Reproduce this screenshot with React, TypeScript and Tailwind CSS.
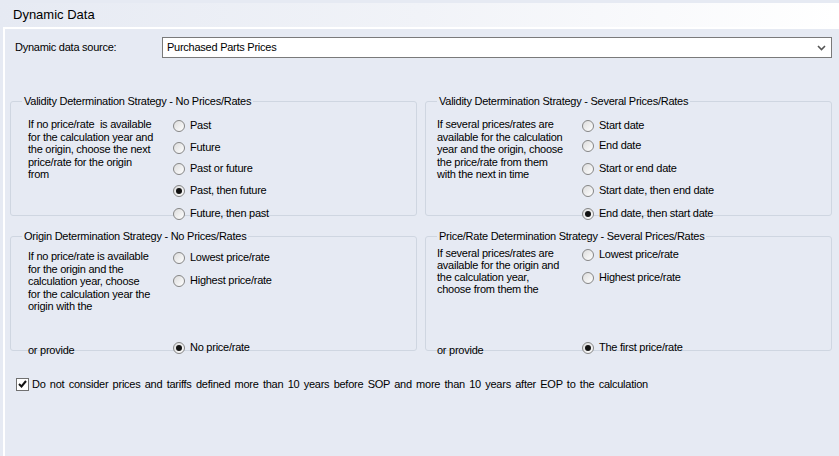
import React from 'react';

function Radio({ label, checked }: { label: string; checked?: boolean }) {
  return (
    <div className="flex items-center h-[13px] whitespace-nowrap">
      <span className="w-[12px] h-[12px] shrink-0 rounded-full border border-[#858585] bg-gradient-to-br from-[#dcdcdc] to-white flex items-center justify-center">
        {checked && <span className="w-[6px] h-[6px] rounded-full bg-[#111]" />}
      </span>
      <span className="ml-[5px]">{label}</span>
    </div>
  );
}

function Group({
  title,
  children,
}: {
  title: string;
  children: React.ReactNode;
}) {
  return (
    <fieldset className="border border-[#cfd6e1] rounded-[3px] h-[121px] px-0 min-w-0">
      <legend className="ml-[11px] px-[2px] leading-[13px] whitespace-nowrap">{title}</legend>
      {children}
    </fieldset>
  );
}

export default function App() {
  return (
    <div
      className="w-[839px] h-[456px] bg-[#e6eaf3] text-[11px] tracking-[-0.25px] text-black overflow-hidden"
      style={{ fontFamily: '"Liberation Sans", Arial, sans-serif' }}
    >
      {/* Title band */}
      <div className="pt-[3px]">
        <div className="h-[24px] bg-gradient-to-r from-[#e6eaf3] via-[#f1f3f8] to-white flex items-center pl-[13px] text-[13px] tracking-normal">
          Dynamic Data
        </div>
      </div>

      <div className="ml-[3px] border-l-2 border-t-2 border-white h-full pl-[5px] pr-[7px]">
        {/* Data source */}
        <div className="flex items-center mt-[8px] h-[21px]">
          <div className="w-[152px] pl-[5px]">Dynamic data source:</div>
          <div className="flex-1 h-[21px] bg-white border border-[#7a7a7a] flex items-center pl-[4px] pr-[5px]">
            <span className="flex-1">Purchased Parts Prices</span>
            <svg width="9" height="6" viewBox="0 0 9 6">
              <path d="M1 1 L4.5 4.5 L8 1" fill="none" stroke="#555" strokeWidth="1.6" />
            </svg>
          </div>
        </div>

        <div className="grid grid-cols-2 gap-x-[8px] gap-y-[14px] mt-[37px]">
          <Group title="Validity Determination Strategy - No Prices/Rates">
            <div className="flex pt-[10px]">
              <div className="w-[162px] pl-[17px] leading-[12.5px] whitespace-nowrap">
                If no price/rate&nbsp; is available
                <br />
                for the calculation year and
                <br />
                the origin, choose the next
                <br />
                price/rate for the origin
                <br />
                from
              </div>
              <div className="flex flex-col pt-[1px]">
                <Radio label="Past" />
                <div className="h-[9px]" />
                <Radio label="Future" />
                <div className="h-[8px]" />
                <Radio label="Past or future" />
                <div className="h-[9px]" />
                <Radio label="Past, then future" checked />
                <div className="h-[10px]" />
                <Radio label="Future, then past" />
              </div>
            </div>
          </Group>

          <Group title="Validity Determination Strategy - Several Prices/Rates">
            <div className="flex pt-[10px]">
              <div className="w-[156px] pl-[11px] leading-[12.5px] whitespace-nowrap">
                If several prices/rates are
                <br />
                available for the calculation
                <br />
                year and the origin, choose
                <br />
                the price/rate from them
                <br />
                with the next in time
              </div>
              <div className="flex flex-col pt-[1px]">
                <Radio label="Start date" />
                <div className="h-[7px]" />
                <Radio label="End date" />
                <div className="h-[10px]" />
                <Radio label="Start or end date" />
                <div className="h-[9px]" />
                <Radio label="Start date, then end date" />
                <div className="h-[10px]" />
                <Radio label="End date, then start date" checked />
              </div>
            </div>
          </Group>

          <Group title="Origin Determination Strategy - No Prices/Rates">
            <div className="flex pt-[7px] h-[113px]">
              <div className="w-[162px] pl-[17px] leading-[12.5px] flex flex-col whitespace-nowrap">
                <div>
                  If no price/rate is available
                  <br />
                  for the origin and the
                  <br />
                  calculation year, choose
                  <br />
                  for the calculation year the
                  <br />
                  origin with the
                </div>
                <div className="mt-auto">or provide</div>
              </div>
              <div className="flex flex-col pt-[1px]">
                <Radio label="Lowest price/rate" />
                <div className="h-[10px]" />
                <Radio label="Highest price/rate" />
                <div className="flex-1" />
                <div className="mb-[2px]">
                  <Radio label="No price/rate" checked />
                </div>
              </div>
            </div>
          </Group>

          <Group title="Price/Rate Determination Strategy - Several Prices/Rates">
            <div className="flex pt-[4px] h-[113px]">
              <div className="w-[156px] pl-[11px] leading-[12px] flex flex-col whitespace-nowrap">
                <div>
                  If several prices/rates are
                  <br />
                  available for the origin and
                  <br />
                  the calculation year,
                  <br />
                  choose from them the
                </div>
                <div className="mt-auto">or provide</div>
              </div>
              <div className="flex flex-col pt-[1px]">
                <Radio label="Lowest price/rate" />
                <div className="h-[10px]" />
                <Radio label="Highest price/rate" />
                <div className="flex-1" />
                <div className="mb-[2px]">
                  <Radio label="The first price/rate" checked />
                </div>
              </div>
            </div>
          </Group>
        </div>

        {/* Checkbox */}
        <div className="flex items-center mt-[25px] pl-[6px]">
          <span className="w-[13px] h-[13px] border border-[#707070] bg-white flex items-center justify-center">
            <svg width="9" height="8" viewBox="0 0 9 8">
              <path d="M1 4 L3.5 6.5 L8 1" fill="none" stroke="#111" strokeWidth="2" />
            </svg>
          </span>
          <span className="ml-[3px] [word-spacing:1.5px]">
            Do not consider prices and tariffs defined more than 10 years before SOP and more than 10 years after EOP to the calculation
          </span>
        </div>
      </div>
    </div>
  );
}
